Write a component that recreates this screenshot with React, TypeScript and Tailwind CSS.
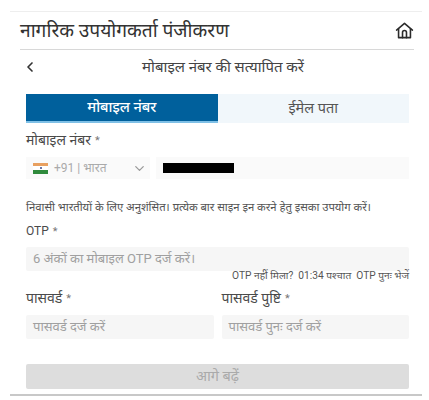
import React from 'react';
import { ChevronDown, ChevronLeft } from 'lucide-react';

const font = "font-['Roboto','Noto_Sans',sans-serif]";

const HomeIcon = () => (
  <svg width="19" height="19" viewBox="0 0 24 24" fill="none" stroke="#2b2b2b" strokeWidth="2" strokeLinecap="round" strokeLinejoin="round">
    <path d="M2 11.5 12 3l10 8.5" />
    <path d="M4.5 10v11h15V10" />
    <path d="M9.5 21v-6.5a2.5 2.5 0 0 1 5 0V21" />
  </svg>
);

const Flag = () => (
  <div className="flex flex-col w-[15px] h-[11px]">
    <div className="flex-1 bg-[#e8a060]" />
    <div className="flex-1 bg-white flex items-center justify-center">
      <div className="w-[2px] h-[2px] rounded-full bg-[#3a4a8a]" />
    </div>
    <div className="flex-1 bg-[#2f8a3c]" />
  </div>
);

const Label = ({ children, small }: { children: React.ReactNode; small?: boolean }) => (
  <label className={`flex items-center gap-[4px] h-[16px] leading-none text-[#4a4a4a] ${small ? 'text-[12px]' : 'text-[14px]'}`}>
    {children}
    <span className="text-[11px] leading-none text-[#777777]">*</span>
  </label>
);

const Field = ({ text }: { text: string }) => (
  <div className="h-[24px] bg-[#f6f6f6] rounded-[2px] pl-[7px] flex items-center text-[13px] text-[#a0a0a0] whitespace-nowrap">{text}</div>
);

export default function App() {
  return (
    <div className={`w-[429px] h-[400px] bg-white overflow-hidden ${font}`}>
      <div className="w-[412px] h-[385px] ml-[10px] mt-[11px] border-t border-t-[#eeeeee] border-b-2 border-b-[#c8c8c8] flex flex-col pl-[10px] pr-[8px]">
        <div className="h-[38px] shrink-0 flex items-center justify-between border-b border-[#d8d8d8]">
          <h1 className="text-[19.2px] font-normal text-[#333333] leading-none whitespace-nowrap">नागरिक उपयोगकर्ता पंजीकरण</h1>
          <HomeIcon />
        </div>
        <div className="relative h-[34px] shrink-0 flex items-center justify-center pl-[12px] text-[15px] text-[#444444] whitespace-nowrap">
          <ChevronLeft className="absolute left-[2px]" size={16} strokeWidth={2.5} color="#333333" />
          मोबाइल नंबर की सत्यापित करें
        </div>
        <div className="pl-[6px] pr-[5px] flex flex-col">
          <div className="flex h-[29px] mt-[10px]">
            <div className="flex-1 bg-[#00609c] text-white text-[14.5px] font-medium flex items-center justify-center border-b-2 border-[#7fc0e6]">मोबाइल नंबर</div>
            <div className="flex-1 bg-[#f1f7fb] text-[#555555] text-[14.5px] flex items-center justify-center">ईमेल पता</div>
          </div>
          <div className="mt-[9px]"><Label>मोबाइल नंबर</Label></div>
          <div className="flex gap-[6px] mt-[9px] h-[22px]">
            <div className="w-[124px] bg-[#fafafa] flex items-center pl-[7px] pr-[3px] text-[12px] text-[#aaaaaa]">
              <Flag />
              <span className="ml-[6px]">+91 | भारत</span>
              <ChevronDown className="ml-auto" size={15} color="#999999" />
            </div>
            <div className="flex-1 bg-[#fafafa] flex items-center pl-[7px]">
              <div className="w-[71px] h-[10px] bg-black" />
            </div>
          </div>
          <p className="mt-[22px] text-[11.3px] leading-[14px] text-[#555555] whitespace-nowrap">निवासी भारतीयों के लिए अनुशंसित। प्रत्येक बार साइन इन करने हेतु इसका उपयोग करें।</p>
          <div className="mt-[8px]"><Label small>OTP</Label></div>
          <div className="mt-[8px]"><Field text="6 अंकों का मोबाइल OTP दर्ज करें।" /></div>
          <p className="text-right text-[10.2px] leading-[10px] text-[#555555] whitespace-nowrap">OTP नहीं मिला?&nbsp; 01:34 पश्चात&nbsp; OTP पुनः भेजें</p>
          <div className="grid grid-cols-2 gap-[8px] mt-[9px]">
            <div>
              <Label>पासवर्ड</Label>
              <div className="mt-[9px]"><Field text="पासवर्ड दर्ज करें" /></div>
            </div>
            <div>
              <Label>पासवर्ड पुष्टि</Label>
              <div className="mt-[9px]"><Field text="पासवर्ड पुनः दर्ज करें" /></div>
            </div>
          </div>
          <button className="mt-[25px] h-[25px] bg-[#dddddd] rounded-[2px] text-[14.5px] text-[#aaaaaa] flex items-center justify-center">आगे बढ़ें</button>
        </div>
      </div>
    </div>
  );
}
